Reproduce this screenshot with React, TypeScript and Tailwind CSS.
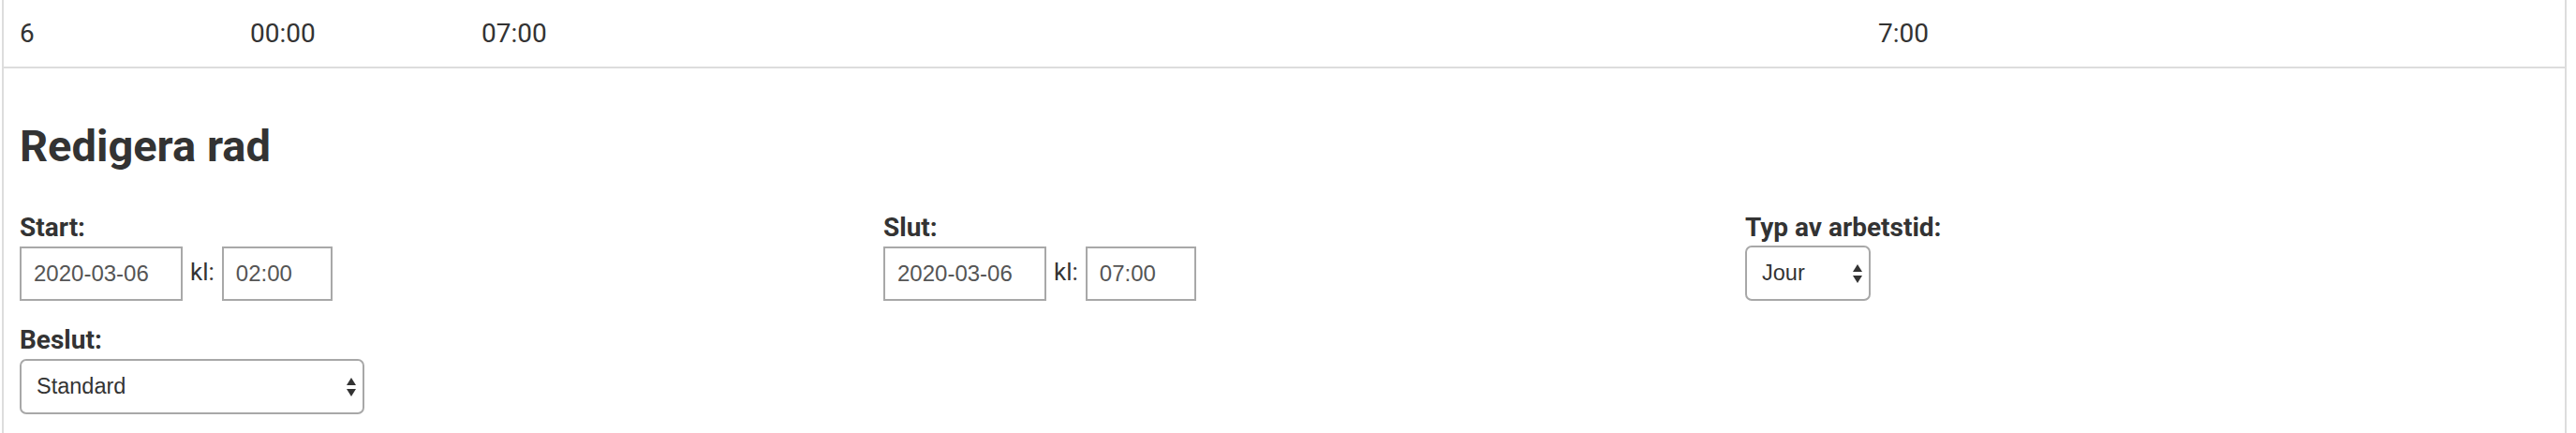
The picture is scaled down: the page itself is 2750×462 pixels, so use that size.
import React from "react";

function Arrows() {
  return (
    <svg
      className="pointer-events-none absolute right-[9px] top-1/2 -translate-y-1/2"
      width="10"
      height="20"
      viewBox="0 0 10 20"
    >
      <polygon points="0,8 5,0 10,8" fill="#333333" />
      <polygon points="0,12 10,12 5,20" fill="#333333" />
    </svg>
  );
}

function Select({ value, width }: { value: string; width: string }) {
  return (
    <div className={`relative h-[59px] ${width}`}>
      <select
        defaultValue={value}
        className="h-full w-full appearance-none rounded-[7px] border-2 border-[#a8a8a8] bg-white pl-[16px] font-['Liberation_Sans',Arial,sans-serif] text-[23.5px] text-[#333333] outline-none"
      >
        <option value={value}>{value}</option>
      </select>
      <Arrows />
    </div>
  );
}

function TextInput({ value, width }: { value: string; width: string }) {
  return (
    <input
      readOnly
      value={value}
      className={`h-[58px] ${width} border-2 border-[#a8a8a8] bg-white pl-[13px] font-['Liberation_Sans',Arial,sans-serif] text-[24px] text-[#555555] outline-none`}
    />
  );
}

function Label({ children }: { children: React.ReactNode }) {
  return (
    <div className="mb-[4px] text-[28px] font-bold leading-[32px] text-[#333333]">
      {children}
    </div>
  );
}

function DateTime({ date, time }: { date: string; time: string }) {
  return (
    <div className="flex items-center gap-[8px]">
      <TextInput value={date} width="w-[174px]" />
      <span className="mb-[4px] text-[26px] leading-[30px] text-[#333333]">kl:</span>
      <TextInput value={time} width="w-[118px]" />
    </div>
  );
}

export default function App() {
  return (
    <div className="min-h-[462px] w-[2750px] bg-white font-['Roboto',sans-serif] text-[#333333]">
      <div className="ml-[2px] min-h-[462px] w-[2738px] border-x-2 border-[#dddddd]">
        <div className="grid h-[73px] grid-cols-[246px_247px_1491px_1fr] border-b-2 border-[#dddddd] text-[28px] leading-[32px]">
          <div className="pl-[17px] pt-[20px]">6</div>
          <div className="pl-[17px] pt-[20px]">00:00</div>
          <div className="pl-[17px] pt-[20px]">07:00</div>
          <div className="pl-[17px] pt-[20px]">7:00</div>
        </div>
        <div className="pl-[17px] pt-[56px]">
          <h2 className="text-[47px] font-bold leading-[54px] text-[#333333]">Redigera rad</h2>
          <div className="mt-[44px] grid grid-cols-[922px_920px_1fr]">
            <div>
              <Label>Start:</Label>
              <DateTime date="2020-03-06" time="02:00" />
            </div>
            <div>
              <Label>Slut:</Label>
              <DateTime date="2020-03-06" time="07:00" />
            </div>
            <div>
              <Label>Typ av arbetstid:</Label>
              <div className="-mt-[1px]">
                <Select value="Jour" width="w-[134px]" />
              </div>
            </div>
          </div>
          <div className="mt-[26px]">
            <Label>Beslut:</Label>
            <Select value="Standard" width="w-[368px]" />
          </div>
        </div>
      </div>
    </div>
  );
}
